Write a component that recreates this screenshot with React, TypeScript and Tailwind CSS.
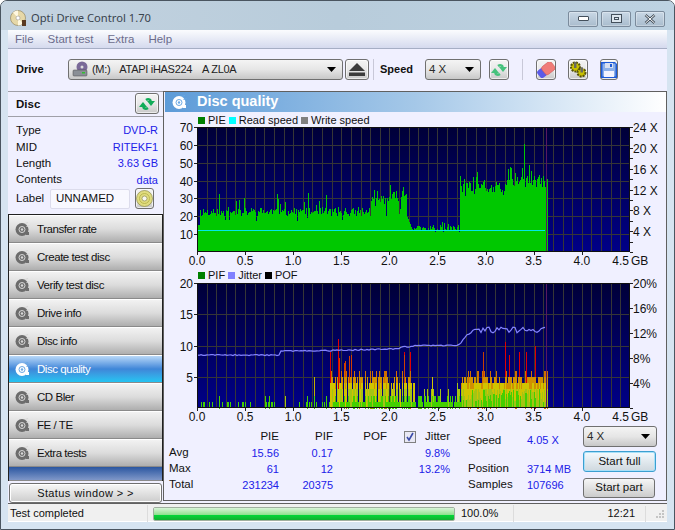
import type { ReactNode } from 'react';

// seeded so the charts come out the same on every run
function makeRand(seed: number) {
  let s = seed;
  return () => {
    s = (s * 1664525 + 1013904223) % 4294967296;
    return s / 4294967296;
  };
}

const PLOT_W = 433;
const PLOT_H = 125;
const PX_PER_GB = 96.2;
const END_GB = 3.63;

function pieValue(gb: number, r: () => number) {
  const a = r();
  const b = r();
  if (gb < 0.02) return 15;
  if (gb < 1.8) {
    let v = 20 + a * 5;
    if (b > 0.93) v += 5 + r() * 5;
    if (b < 0.05) v -= 3;
    return v;
  }
  if (gb < 2.17) {
    let v = 25 + (gb - 1.8) * 12 + a * 6;
    if (b > 0.88) v += 5;
    if (b < 0.08) v -= 9;
    return v;
  }
  if (gb < 2.24) return 20 - (gb - 2.17) * 130;
  if (gb < 2.72) {
    let v = 11 + a * 3.5;
    if (b > 0.9) v += 2.5;
    return v;
  }
  if (gb < 3.2) {
    let v = 32 + a * 7;
    if (b > 0.85) v += 6;
    if (b < 0.1) v -= 3;
    return v;
  }
  let v = 36 + a * 7;
  if (b > 0.85) v += 6;
  return v;
}

const pieBars: number[] = [];
{
  const r = makeRand(11);
  for (let i = 0; i < END_GB * PX_PER_GB; i++) {
    const gb = i / PX_PER_GB;
    let v = pieValue(gb, r);
    if (i === 326) v = 60.5;
    pieBars.push(v);
  }
}

type Seg = { h: number; c: string };
const pifBars: Seg[][] = [];
{
  const r = makeRand(29);
  const GREEN = '#44d000';
  const OLIVE = '#a4c414';
  const YELLOW = '#d0c400';
  const ORANGE = '#d09000';
  const DEEP = '#d07000';
  for (let i = 0; i < END_GB * PX_PER_GB; i++) {
    const gb = i / PX_PER_GB;
    const segs: Seg[] = [];
    const a = r();
    const b = r();
    if (gb < 1.37) {
      if (a > 0.72) segs.push({ h: b > 0.8 ? 2 : 1, c: GREEN });
      if (i === 87) segs.push({ h: 2, c: OLIVE });
      if (i === 116) segs.push({ h: 5, c: '#c0b000' });
    } else if (gb < 2.25) {
      segs.push({ h: 1 + Math.floor(a * 2.5), c: GREEN });
      if (r() > 0.15) {
        segs.push({ h: 3, c: b > 0.5 ? OLIVE : YELLOW });
        if (b > 0.3) segs.push({ h: 4, c: YELLOW });
        if (r() > 0.5) segs.push({ h: 5, c: ORANGE });
        if (r() > 0.7) segs.push({ h: 6, c: DEEP });
      }
      const s = r();
      if (s > 0.93) segs.push({ h: 7 + r() * 2, c: '#d04000' });
      if (i === 140) segs.push({ h: 11, c: '#e00000' });
      if (i === 132 || i === 206 || i === 212) segs.push({ h: 9, c: '#e00000' });
    } else if (gb < 2.73) {
      if (a > 0.2) segs.push({ h: 1 + Math.floor(b * 2), c: GREEN });
      if (r() > 0.9) segs.push({ h: 3, c: OLIVE });
      if (i === 234) segs.push({ h: 5, c: YELLOW });
      if (i === 259) segs.push({ h: 4, c: OLIVE });
    } else {
      segs.push({ h: 1 + a * 2, c: b > 0.5 ? OLIVE : GREEN });
      segs.push({ h: 3, c: b > 0.3 ? YELLOW : OLIVE });
      segs.push({ h: 4, c: r() > 0.5 ? ORANGE : YELLOW });
      if (r() > 0.45) segs.push({ h: 5, c: ORANGE });
      if (r() > 0.82) segs.push({ h: 6, c: DEEP });
      if (i === 307) segs.push({ h: 10.5, c: '#e00000' });
      if (i === 311) segs.push({ h: 8.5, c: '#e00000' });
      if (i === 321 || i === 328) segs.push({ h: 9, c: '#e00000' });
      if (i === 337) segs.push({ h: 10, c: '#e00000' });
      if (i === 285) segs.push({ h: 9, c: '#c84000' });
    }
    pifBars.push(segs);
  }
}

const jitterPoints = (() => {
  const r = makeRand(5);
  const pts: string[] = [];
  for (let i = 0; i < END_GB * PX_PER_GB; i += 2) {
    const gb = i / PX_PER_GB;
    let y = 72;
    let n = 1.2;
    if (gb >= 0.86) y = 68;
    if (gb >= 1.2) y = 68 - (gb - 1.2) * 2.5;
    if (gb >= 2.1) {
      y = 64;
      n = 2;
    }
    if (gb >= 2.25) {
      y = 62.5;
      n = 1;
    }
    if (gb >= 2.72) {
      y = 62 - Math.min(1, (gb - 2.72) / 0.12) * 13;
      n = 2;
    }
    if (gb >= 2.84) {
      y = 47;
      n = 6;
    }
    pts.push(`${i},${(y + (r() - 0.5) * n).toFixed(1)}`);
  }
  return pts.join(' ');
})();

const GB_LABELS = ['0.0', '0.5', '1.0', '1.5', '2.0', '2.5', '3.0', '3.5', '4.0'];

function Grid({ id, rows }: { id: string; rows: number }) {
  return (
    <>
      <defs>
        <linearGradient id={id} x1="0" y1="0" x2="0" y2="1">
          <stop offset="0" stopColor="#000038" />
          <stop offset="1" stopColor="#000088" />
        </linearGradient>
      </defs>
      <rect x="0" y="0" width={PLOT_W} height={PLOT_H} fill={`url(#${id})`} />
      {Array.from({ length: 45 }, (_, i) => (
        <line key={i} x1={Math.round(i * 9.62) + 0.5} x2={Math.round(i * 9.62) + 0.5} y1="0" y2={PLOT_H} stroke="#363636" />
      ))}
      {Array.from({ length: rows }, (_, i) => (
        <line key={i} x1="0" x2={PLOT_W} y1={Math.round((i * PLOT_H) / rows) + 0.5} y2={Math.round((i * PLOT_H) / rows) + 0.5} stroke="#363636" />
      ))}
    </>
  );
}

function Axes({ left, right, rightTicks }: { left: { v: string; y: number }[]; right: { v: string; y: number }[]; rightTicks: number }) {
  return (
    <>
      <path d={`M0.5 0V${PLOT_H - 0.5}H${PLOT_W - 0.5}V0.5H0.5`} fill="none" stroke="#101010" strokeWidth="1" />
      {left.map((l) => (
        <g key={l.v}>
          <line x1="-3" x2="0" y1={l.y + 0.5} y2={l.y + 0.5} stroke="#202020" />
          <text x="-4" y={l.y + 4.5} textAnchor="end" fontSize="12" fill="#111">
            {l.v}
          </text>
        </g>
      ))}
      {Array.from({ length: rightTicks + 1 }, (_, i) => (
        <line key={i} x1={PLOT_W} x2={PLOT_W + 3} y1={Math.round((i * PLOT_H) / rightTicks) + 0.5} y2={Math.round((i * PLOT_H) / rightTicks) + 0.5} stroke="#202020" />
      ))}
      {right.map((l) => (
        <text key={l.v} x={PLOT_W + 3} y={l.y + 4.5} fontSize="12" fill="#111">
          {l.v}
        </text>
      ))}
      {GB_LABELS.map((g, i) => (
        <g key={g}>
          <line x1={Math.round(i * 48.1) + 0.5} x2={Math.round(i * 48.1) + 0.5} y1={PLOT_H} y2={PLOT_H + 3} stroke="#202020" />
          <text x={i * 48.1} y={PLOT_H + 13} textAnchor="middle" fontSize="12" fill="#111">
            {g}
          </text>
        </g>
      ))}
      <text x={PLOT_W - 1} y={PLOT_H + 13} textAnchor="end" fontSize="12" fill="#111">
        4.5
      </text>
      <text x={PLOT_W + 1} y={PLOT_H + 13} fontSize="12" fill="#111">
        GB
      </text>
    </>
  );
}

function PieChart() {
  const u = PLOT_H / 70;
  return (
    <svg width="501" height="142" viewBox="-32 0 501 142" className="block overflow-visible">
      <Grid id="pieBg" rows={7} />
      <g shapeRendering="crispEdges">
        {pieBars.map((v, i) => (
          <rect key={i} x={i + 1} y={Math.round(PLOT_H - v * u)} width="1" height={Math.round(v * u)} fill="#00c800" />
        ))}
      </g>
      <line x1="1" x2="348" y1="103.5" y2="103.5" stroke="#00e8e8" />
      <line x1="349.5" x2="349.5" y1="0" y2={PLOT_H - 1} stroke="#581860" />
      <Axes
        left={[70, 60, 50, 40, 30, 20, 10].map((v) => ({ v: String(v), y: Math.round(PLOT_H - v * u) }))}
        right={[24, 20, 16, 12, 8, 4].map((v) => ({ v: `${v} X`, y: Math.round(PLOT_H - (v * PLOT_H) / 24) }))}
        rightTicks={12}
      />
    </svg>
  );
}

function PifChart() {
  const u = PLOT_H / 20;
  return (
    <svg width="501" height="142" viewBox="-32 0 501 142" className="block overflow-visible">
      <Grid id="pifBg" rows={4} />
      <g shapeRendering="crispEdges">
        {pifBars.map((segs, i) =>
          [...segs]
            .sort((a, b) => b.h - a.h)
            .map((s, j) => <rect key={`${i}-${j}`} x={i + 1} y={Math.round(PLOT_H - s.h * u)} width="1" height={Math.round(s.h * u)} fill={s.c} />),
        )}
      </g>
      <polyline points={jitterPoints} fill="none" stroke="#8484ff" strokeWidth="1.2" />
      <line x1="349.5" x2="349.5" y1="0" y2={PLOT_H - 1} stroke="#581860" />
      <Axes
        left={[20, 15, 10, 5].map((v) => ({ v: String(v), y: Math.round(PLOT_H - v * u) }))}
        right={[20, 16, 12, 8, 4].map((v) => ({ v: `${v}%`, y: Math.round(PLOT_H - (v * PLOT_H) / 20) }))}
        rightTicks={5}
      />
    </svg>
  );
}

function Legend({ items, className }: { items: { label: string; color: string }[]; className: string }) {
  return (
    <div className={`flex items-center gap-[3px] pl-[33px] text-[11px] leading-none text-[#111] ${className}`}>
      {items.map((it) => (
        <span key={it.label} className="flex items-center gap-[3px]">
          <span className={`h-[7px] w-[7px] ${it.color}`} />
          {it.label}
        </span>
      ))}
    </div>
  );
}

function RefreshIcon({ faded }: { faded?: boolean }) {
  const c = faded ? '#45c27c' : '#10ac58';
  return (
    <svg width="18" height="16" viewBox="0 0 18 16">
      <path d="M8 4C9.500 3 11.500 3 13 5" fill="none" stroke={c} strokeWidth="2.600" />
      <path d="M9 5h8l-4 5z" fill={c} />
      <path d="M10 12C8.500 13 6.500 13 5 11" fill="none" stroke={c} strokeWidth="2.600" />
      <path d="M1 11h8L5 6z" fill={c} />
    </svg>
  );
}

function ToolButton({ children, className = 'w-[24px]' }: { children: ReactNode; className?: string }) {
  return (
    <div
      className={`flex h-[21px] items-center justify-center rounded-[3px] border border-[#707070] bg-gradient-to-b from-[#f4f4f4] via-[#e8e8e8] to-[#c8c8c8] shadow-[inset_0_0_0_1px_#ffffffa0] ${className}`}
    >
      {children}
    </div>
  );
}

function Combo({ children, className }: { children: ReactNode; className: string }) {
  return (
    <div
      className={`flex h-[21px] items-center justify-between rounded-[3px] border border-[#707070] bg-gradient-to-b from-[#f4f4f4] via-[#e6e6e6] to-[#c8c8c8] pl-[3px] pr-[6px] text-[12px] text-[#2a2a2a] ${className}`}
    >
      {children}
      <svg width="9" height="5" viewBox="0 0 9 5">
        <path d="M0 0h9L4.5 5z" fill="#000" />
      </svg>
    </div>
  );
}

function DiscIcon({ active }: { active?: boolean }) {
  const c = active ? '#ffffff' : '#6c6c6c';
  const h = active ? '#6aa8e4' : '#d8d8d8';
  return (
    <svg width="15" height="15" viewBox="0 0 15 15">
      <circle cx="7" cy="7.500" r="6.500" fill={c} />
      <circle cx="7" cy="7.500" r="3" fill="none" stroke={h} strokeWidth="1" />
      <circle cx="7" cy="7.500" r="1.200" fill={h} />
      <path d="M10 1.500l3-1M11.500 4.500l3-1" stroke={h} strokeWidth="1.200" />
      <path d="M11 10h3v3h-3z" fill={c} />
    </svg>
  );
}

const NAV = ['Transfer rate', 'Create test disc', 'Verify test disc', 'Drive info', 'Disc info', 'Disc quality', 'CD Bler', 'FE / TE', 'Extra tests'];

function NavItem({ label, active }: { label: string; active: boolean }) {
  return (
    <div
      className={`flex h-[28px] items-center gap-[7px] border-b border-t border-b-[#8a8a8a] border-t-white pl-[6px] text-[11.5px] tracking-[-0.45px] ${
        active
          ? 'bg-gradient-to-b from-[#b8d8f8] via-[#3f86d8] to-[#22c4f2] text-white'
          : 'bg-gradient-to-b from-[#f2f2f2] via-[#dcdcdc] to-[#aeaeae] text-[#111]'
      }`}
    >
      <DiscIcon active={active} />
      <span>{label}</span>
    </div>
  );
}

function InfoRow({ label, value }: { label: string; value: string }) {
  return (
    <div className="flex h-[16.4px] items-center justify-between pr-[1px] text-[11.5px] leading-none">
      <span className="text-[#111]">{label}</span>
      <span className="text-[11px] text-[#2020e8]">{value}</span>
    </div>
  );
}

function WinButton({ children, className }: { children: ReactNode; className: string }) {
  return (
    <div className={`flex h-[16px] items-center justify-center rounded-[2px] border border-[#7b8b9c] bg-gradient-to-b from-[#c9d8e6] to-[#a9bccd] shadow-[inset_0_0_0_1px_#ffffff50] ${className}`}>
      {children}
    </div>
  );
}

const STATS = [
  { name: 'Avg', pie: '15.56', pif: '0.17', jit: '9.8%' },
  { name: 'Max', pie: '61', pif: '12', jit: '13.2%' },
  { name: 'Total', pie: '231234', pif: '20375', jit: '' },
];

export default function App() {
  return (
    <div className="flex h-[530px] w-[675px] flex-col overflow-hidden rounded-t-[7px] border border-[#4a5560] bg-[#d6e4f1] font-['Liberation_Sans',Arial,sans-serif]">
      {/* title bar */}
      <div className="flex h-[29px] shrink-0 items-center bg-gradient-to-r from-[#c4d3e0] via-[#b8ccdb] to-[#bdd2e2] pl-[9px] pr-[9px] pt-[6px]">
        <svg width="17" height="17" viewBox="0 0 17 17">
          <circle cx="8" cy="8" r="7.500" fill="#e6d8a8" stroke="#8a7a50" strokeWidth="0.6" />
          <path d="M8 8L3 2.500A7.500 7.500 0 0 1 8 .5z" fill="#fff8e0" />
          <path d="M8 8l5 5.500A7.500 7.500 0 0 1 8 15.500z" fill="#fff8e0" />
          <circle cx="8" cy="8" r="2" fill="#fff" stroke="#888" strokeWidth="0.5" />
          <path d="M12 10h4v6h-4z" fill="#5a3a20" />
        </svg>
        <span className="ml-[4px] font-['Noto_Sans',sans-serif] text-[11.2px] text-[#39434d]">Opti Drive Control 1.70</span>
        <div className="ml-auto flex gap-[3px]">
          <WinButton className="w-[30px]">
            <span className="h-[5px] w-[11px] rounded-[1px] border border-[#44505c] bg-white" />
          </WinButton>
          <WinButton className="w-[30px]">
            <span className="flex h-[9px] w-[11px] items-center justify-center border border-[#44505c] bg-[#dde6ee]">
              <span className="h-[3px] w-[5px] border border-[#44505c]" />
            </span>
          </WinButton>
          <WinButton className="ml-px w-[30px]">
            <svg width="12" height="10" viewBox="0 0 12 10">
              <path d="M1.500 1l9 8M10.500 1l-9 8" stroke="#44505c" strokeWidth="2.400" />
              <path d="M1.500 1l9 8M10.500 1l-9 8" stroke="#fff" strokeWidth="1" />
            </svg>
          </WinButton>
        </div>
      </div>

      {/* client area */}
      <div className="mx-[7px] flex w-[659px] flex-col bg-[#f0f0ff]">
        <div className="flex h-[19px] items-center gap-[14px] border-b border-[#a6aec4] bg-gradient-to-b from-[#fbfcfe] to-[#d5daee] pl-[7px] pt-[1px] text-[11.5px] text-[#6c6c8c]">
          <span>File</span>
          <span>Start test</span>
          <span>Extra</span>
          <span>Help</span>
        </div>

        {/* toolbar */}
        <div className="flex h-[42px] items-center pb-[1px] text-[12px]">
          <span className="ml-[8px] w-[52px] text-[11px] font-bold text-[#111]">Drive</span>
          <Combo className="w-[275px]">
            <span className="flex items-center text-[11px] tracking-[-0.3px] text-[#222]">
              <svg width="17" height="17" viewBox="0 0 17 17">
                <circle cx="10" cy="6" r="5.500" fill="#7a6a98" />
                <circle cx="10" cy="6" r="1.500" fill="#ddd" />
                <rect x="1" y="9" width="14" height="6" rx="1" fill="#8a8f96" stroke="#4a4a4a" strokeWidth="0.5" />
                <rect x="10" y="11" width="3" height="1.500" fill="#30c030" />
              </svg>
              <span className="ml-[3px]">(M:)</span>
              <span className="ml-[9px]">ATAPI iHAS224</span>
              <span className="ml-[10px]">A ZL0A</span>
            </span>
          </Combo>
          <ToolButton className="ml-[2px] w-[24px]">
            <svg width="16" height="13" viewBox="0 0 16 13">
              <path d="M8 0l8 8H0z" fill="#3c3c3c" />
              <rect x="0" y="9.500" width="16" height="3.500" fill="#3c3c3c" />
            </svg>
          </ToolButton>
          <span className="ml-[4px] h-[21px] w-px bg-[#c8c8d8]" />
          <span className="ml-[6px] w-[45px] text-[11px] font-bold text-[#111]">Speed</span>
          <Combo className="w-[56px]">
            <span className="text-[11.5px]">4 X</span>
          </Combo>
          <ToolButton className="ml-[8px]">
            <RefreshIcon faded />
          </ToolButton>
          <span className="ml-[13px] h-[21px] w-px bg-[#c8c8d8]" />
          <ToolButton className="ml-[13px]">
            <svg width="18" height="16" viewBox="0 0 18 16">
              <g transform="rotate(-38 9 8)">
                <rect x="0" y="3.500" width="8" height="9" rx="2.500" fill="#5a5ae8" />
                <rect x="6" y="3" width="12" height="10" rx="2.500" fill="#f07c78" stroke="#c85858" strokeWidth="0.5" />
              </g>
            </svg>
          </ToolButton>
          <ToolButton className="ml-[12px]">
            <svg width="18" height="17" viewBox="0 0 18 17">
              <circle cx="6.500" cy="6" r="4.500" fill="#c8c000" stroke="#56520a" strokeWidth="2" strokeDasharray="2 1" />
              <circle cx="12.500" cy="11.500" r="4" fill="#c8c000" stroke="#56520a" strokeWidth="2" strokeDasharray="2 1" />
              <rect x="5" y="1" width="2.500" height="6" fill="#6a6a60" />
              <rect x="11.500" y="6.500" width="2.500" height="5" fill="#6a6a60" />
            </svg>
          </ToolButton>
          <ToolButton className="ml-[12px]">
            <svg width="16" height="16" viewBox="0 0 16 16">
              <path d="M0 0h14l2 2v14H0z" fill="#1c5ad8" />
              <rect x="1.500" y="1.500" width="13" height="13" fill="#8cb0e8" />
              <rect x="4" y="1" width="8" height="5" fill="#d8e0f0" />
              <rect x="9" y="2" width="2" height="3" fill="#1c5ad8" />
              <rect x="3" y="9" width="10" height="6" fill="#f4f4ff" />
            </svg>
          </ToolButton>
        </div>

        {/* main */}
        <div className="flex h-[413px] border-b border-[#606060]">
          {/* left column */}
          <div className="flex w-[155px] shrink-0 flex-col">
            <div className="flex h-[26px] items-center justify-between border-b border-t border-[#a0a0a8] pl-[8px] pr-[4px] text-[11.5px] font-bold text-[#111]">
              <span className="pt-[1px]">Disc</span>
              <ToolButton>
                <RefreshIcon />
              </ToolButton>
            </div>
            <div className="flex flex-col pl-[8px] pr-[4px] pt-[6px]">
              <InfoRow label="Type" value="DVD-R" />
              <InfoRow label="MID" value="RITEKF1" />
              <InfoRow label="Length" value="3.63 GB" />
              <InfoRow label="Contents" value="data" />
              <div className="flex items-center text-[11.5px] text-[#111]">
                <span className="w-[34px]">Label</span>
                <span className="flex h-[20px] w-[80px] items-center rounded-[2px] border border-[#dcdcec] bg-[#f8f8ff] pl-[5px]">UNNAMED</span>
                <ToolButton className="ml-[5px]">
                  <svg width="17" height="17" viewBox="0 0 17 17">
                    <circle cx="8.500" cy="8.500" r="8" fill="#e0dc80" stroke="#7c7a3c" strokeWidth="0.6" />
                    <circle cx="8.500" cy="8.500" r="5" fill="none" stroke="#bdb94e" />
                    <circle cx="8.500" cy="8.500" r="2.500" fill="#f8f8f0" stroke="#7c7a3c" strokeWidth="0.6" />
                  </svg>
                </ToolButton>
              </div>
            </div>
            <div className="mt-[5px] flex flex-col border-l border-r border-t border-[#202020]">
              {NAV.map((n) => (
                <NavItem key={n} label={n} active={n === 'Disc quality'} />
              ))}
              <div className="h-[14px] border-b border-[#8a8a8a] bg-gradient-to-b from-[#2a56a0] to-[#7f97c8]" />
            </div>
            <div className="mx-px mt-[2px] flex h-[20px] items-center justify-center rounded-[3px] border border-[#707070] bg-gradient-to-b from-[#f8f8f8] to-[#cccccc] text-[11px] tracking-[0.4px] text-[#111] shadow-[inset_0_0_0_1px_#ffffff]">
              Status window &gt; &gt;
            </div>
          </div>

          {/* right panel */}
          <div className="flex h-[410px] w-[504px] flex-col border border-[#606060] pl-px">
            <div className="flex h-[20px] items-center gap-[10px] bg-gradient-to-r from-[#5c9bd8] via-[#a5c8e8] to-[#ffffff] pl-[7px] text-[14.5px] font-bold text-white">
              <DiscIcon active />
              <span>Disc quality</span>
            </div>
            <Legend
              className="h-[15px] pt-[1px]"
              items={[
                { label: 'PIE', color: 'bg-[#008000]' },
                { label: 'Read speed', color: 'bg-[#00ffff]' },
                { label: 'Write speed', color: 'bg-[#808080]' },
              ]}
            />
            <PieChart />
            <Legend
              className="h-[14px] pb-[2px]"
              items={[
                { label: 'PIF', color: 'bg-[#008000]' },
                { label: 'Jitter', color: 'bg-[#8080ff]' },
                { label: 'POF', color: 'bg-black' },
              ]}
            />
            <PifChart />

            {/* stats */}
            <div className="flex text-[11.5px] leading-none">
              <div className="ml-[4px] mt-[3px] grid h-[65px] w-[281px] grid-cols-[30px_80px_54px_62px_55px] grid-rows-[17px_16px_16px_16px] items-center text-[#111]">
                <span />
                <span className="text-right">PIE</span>
                <span className="text-right">PIF</span>
                <span className="pr-[8px] text-right">POF</span>
                <span className="flex items-center justify-end gap-[9px]">
                  <span className="flex h-[12px] w-[12px] items-center justify-center border border-[#808080] bg-[#e8e8f4]">
                    <svg width="10" height="10" viewBox="0 0 10 10">
                      <path d="M2 5l2 3 4-7" fill="none" stroke="#3a4aa8" strokeWidth="1.600" />
                    </svg>
                  </span>
                  Jitter
                </span>
                {STATS.map((s) => (
                  <div key={s.name} className="contents">
                    <span>{s.name}</span>
                    <span className="text-right text-[11px] text-[#2020e8]">{s.pie}</span>
                    <span className="text-right text-[11px] text-[#2020e8]">{s.pif}</span>
                    <span />
                    <span className="text-right text-[11px] text-[#2020e8]">{s.jit}</span>
                  </div>
                ))}
              </div>
              <div className="ml-[18px] grid h-[67px] w-[114px] grid-cols-[59px_55px] grid-rows-[21px_15px_16px_16px] items-center text-[#111]">
                <span className="self-end">Speed</span>
                <span className="self-end text-[11px] text-[#2020e8]">4.05 X</span>
                <span />
                <span />
                <span>Position</span>
                <span className="text-[11px] text-[#2020e8]">3714 MB</span>
                <span>Samples</span>
                <span className="text-[11px] text-[#2020e8]">107696</span>
              </div>
              <div className="ml-[1px] mt-[1px] flex w-[75px] flex-col">
                <Combo className="w-[74px]">
                  <span className="text-[11.5px]">4 X</span>
                </Combo>
                <div className="mt-[4px] flex h-[21px] w-[73px] items-center justify-center rounded-[3px] border border-[#3c9fd0] bg-gradient-to-b from-[#f4fafe] to-[#cfd8de] text-[11.5px] text-[#111] shadow-[inset_0_0_0_1px_#a8e0f8]">
                  Start full
                </div>
                <div className="mt-[6px] flex h-[20px] w-[72px] items-center justify-center rounded-[3px] border border-[#707070] bg-gradient-to-b from-[#f6f6f6] to-[#cccccc] text-[11.5px] text-[#111]">
                  Start part
                </div>
              </div>
            </div>
          </div>
        </div>

        {/* status bar */}
        <div className="flex h-[18px] items-center border-b border-[#ffffff] bg-[#f0f0f0] pt-[2px] text-[11px] text-[#111]">
          <span className="w-[140px] border-r border-[#dcdcdc] pl-[2px]">Test completed</span>
          <div className="ml-[5px] flex h-[14px] w-[302px] flex-col overflow-hidden rounded-[2px] border border-[#a0b0a0]">
            <span className="h-[7px] bg-gradient-to-b from-[#d8f4d8] to-[#8ce08c]" />
            <span className="flex-1 bg-gradient-to-b from-[#00d838] to-[#10b030]" />
          </div>
          <span className="ml-[6px] w-[53px] border-r border-[#dcdcdc]">100.0%</span>
          <span className="w-[121px] text-right">12:21</span>
          <span className="ml-[10px] h-[16px] w-px bg-[#dcdcdc]" />
          <svg width="12" height="12" viewBox="0 0 12 12" className="ml-[7px]">
            <path d="M9 2h2v2H9zM6 5h2v2H6zM9 5h2v2H9zM3 8h2v2H3zM6 8h2v2H6zM9 8h2v2H9z" fill="#c4c4c4" />
          </svg>
        </div>
      </div>
    </div>
  );
}
